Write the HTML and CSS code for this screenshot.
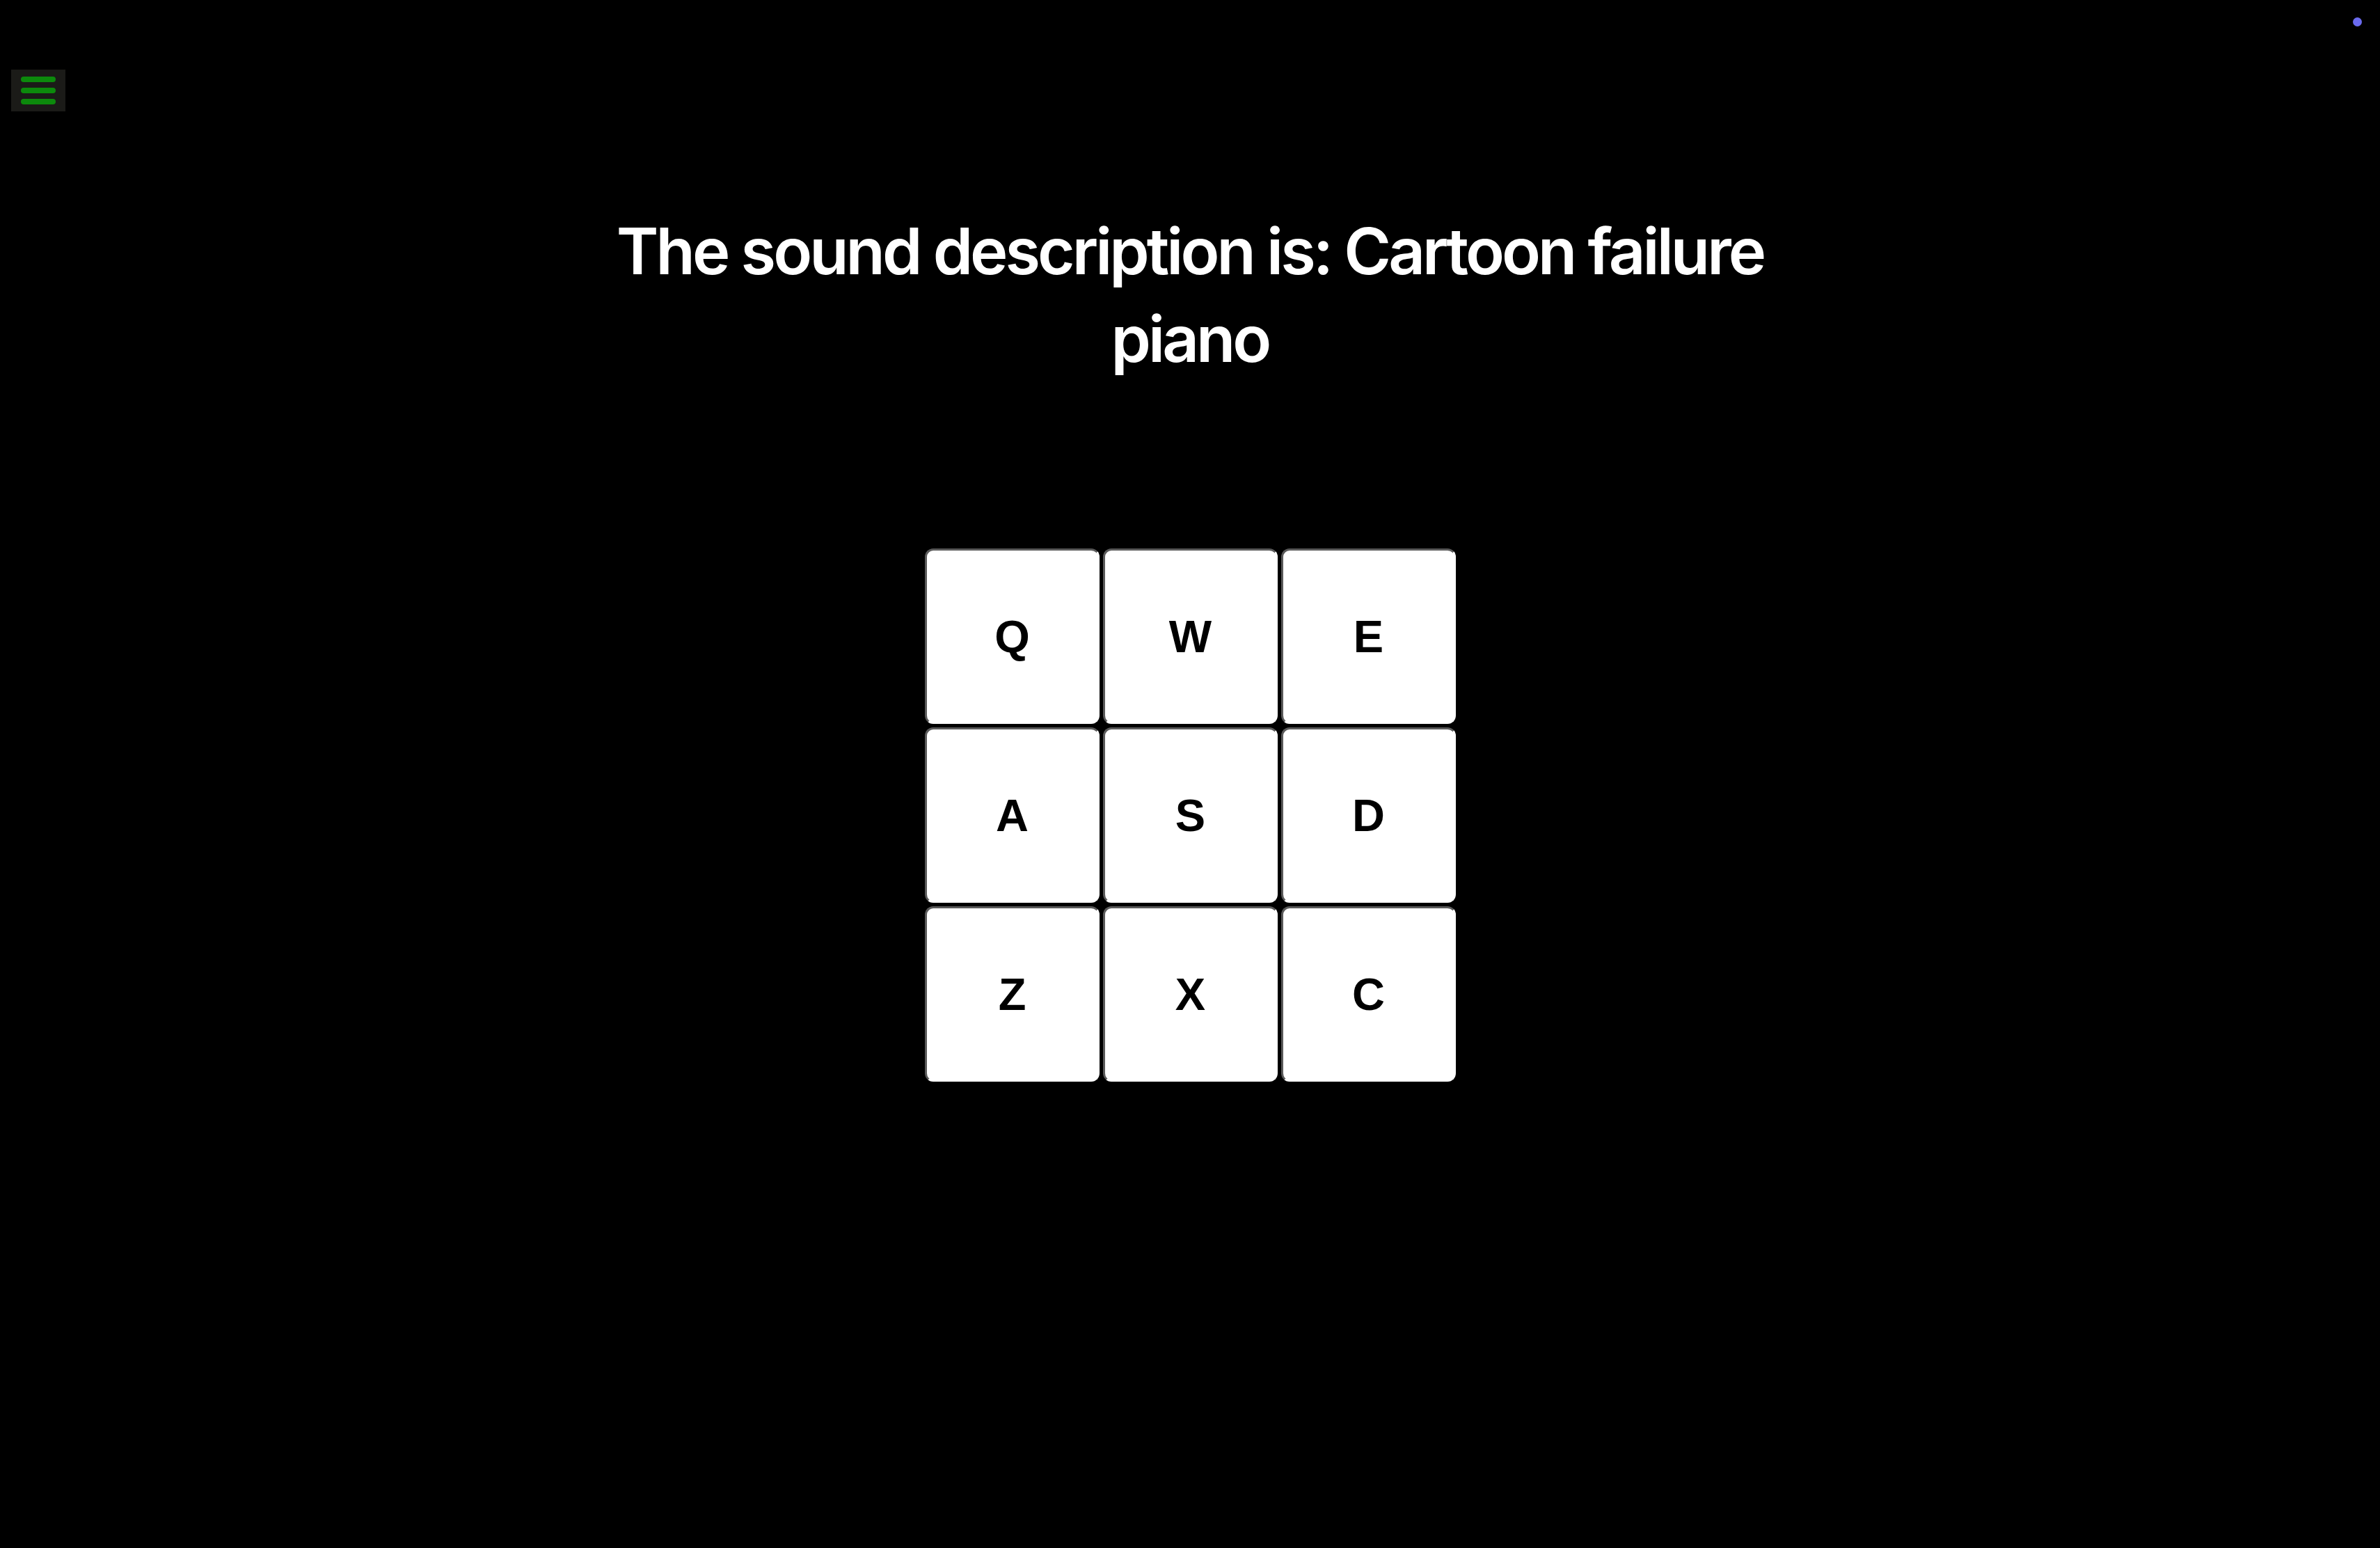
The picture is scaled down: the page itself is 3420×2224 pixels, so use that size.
FILE: index.html
```html
<!DOCTYPE html>
<html lang="en">
<head>
<meta charset="utf-8">
<title>Sound Pad</title>
<link rel="stylesheet" href="styles.css">
</head>
<body>
<div class="page">
  <header class="topbar">
    <button class="menu-btn" aria-label="Menu">
      <span class="bar"></span>
      <span class="bar"></span>
      <span class="bar"></span>
    </button>
  </header>
  <main class="main">
    <h1 class="title">The sound description is: Cartoon failure piano</h1>
    <div class="pad">
      <div class="key">Q</div>
      <div class="key">W</div>
      <div class="key">E</div>
      <div class="key">A</div>
      <div class="key">S</div>
      <div class="key">D</div>
      <div class="key">Z</div>
      <div class="key">X</div>
      <div class="key">C</div>
    </div>
  </main>
  <span class="status-dot"></span>
</div>
</body>
</html>
```
FILE: styles.css
```css
html, body {
  margin: 0;
  padding: 0;
  background: #000;
}
body {
  font-family: Inter, "Liberation Sans", sans-serif;
  color: #fff;
}
.page {
  position: relative;
  min-height: 2224px;
}
.topbar {
  display: flex;
  padding: 100px 0 0 16px;
}
.menu-btn {
  width: 78px;
  height: 60px;
  padding: 0;
  border: none;
  background: #1b1b18;
  display: flex;
  flex-direction: column;
  align-items: center;
  justify-content: center;
  gap: 8px;
}
.bar {
  display: block;
  width: 50px;
  height: 8px;
  border-radius: 4px;
  background: #0c8a0c;
}
.main {
  display: flex;
  flex-direction: column;
  align-items: center;
}
.title {
  margin: 138px 0 0;
  max-width: 1800px;
  text-align: center;
  font-size: 92px;
  line-height: 126px;
  font-weight: 600;
  letter-spacing: -0.043em;
}
.pad {
  margin-top: 238px;
  display: grid;
  grid-template-columns: repeat(3, 251px);
  grid-auto-rows: 252px;
  gap: 5px;
}
.key {
  box-sizing: border-box;
  background: #fff;
  border-style: solid;
  border-width: 3px 2px 2px 3px;
  border-color: #5a5a5a #fff #fff #5a5a5a;
  border-radius: 12px;
  display: flex;
  align-items: center;
  justify-content: center;
  color: #000;
  font-family: "Liberation Sans", Arial, sans-serif;
  font-weight: 700;
  font-size: 65px;
}
.status-dot {
  position: absolute;
  top: 25px;
  right: 26px;
  width: 13px;
  height: 13px;
  border-radius: 50%;
  background: #6a6aee;
}
```
